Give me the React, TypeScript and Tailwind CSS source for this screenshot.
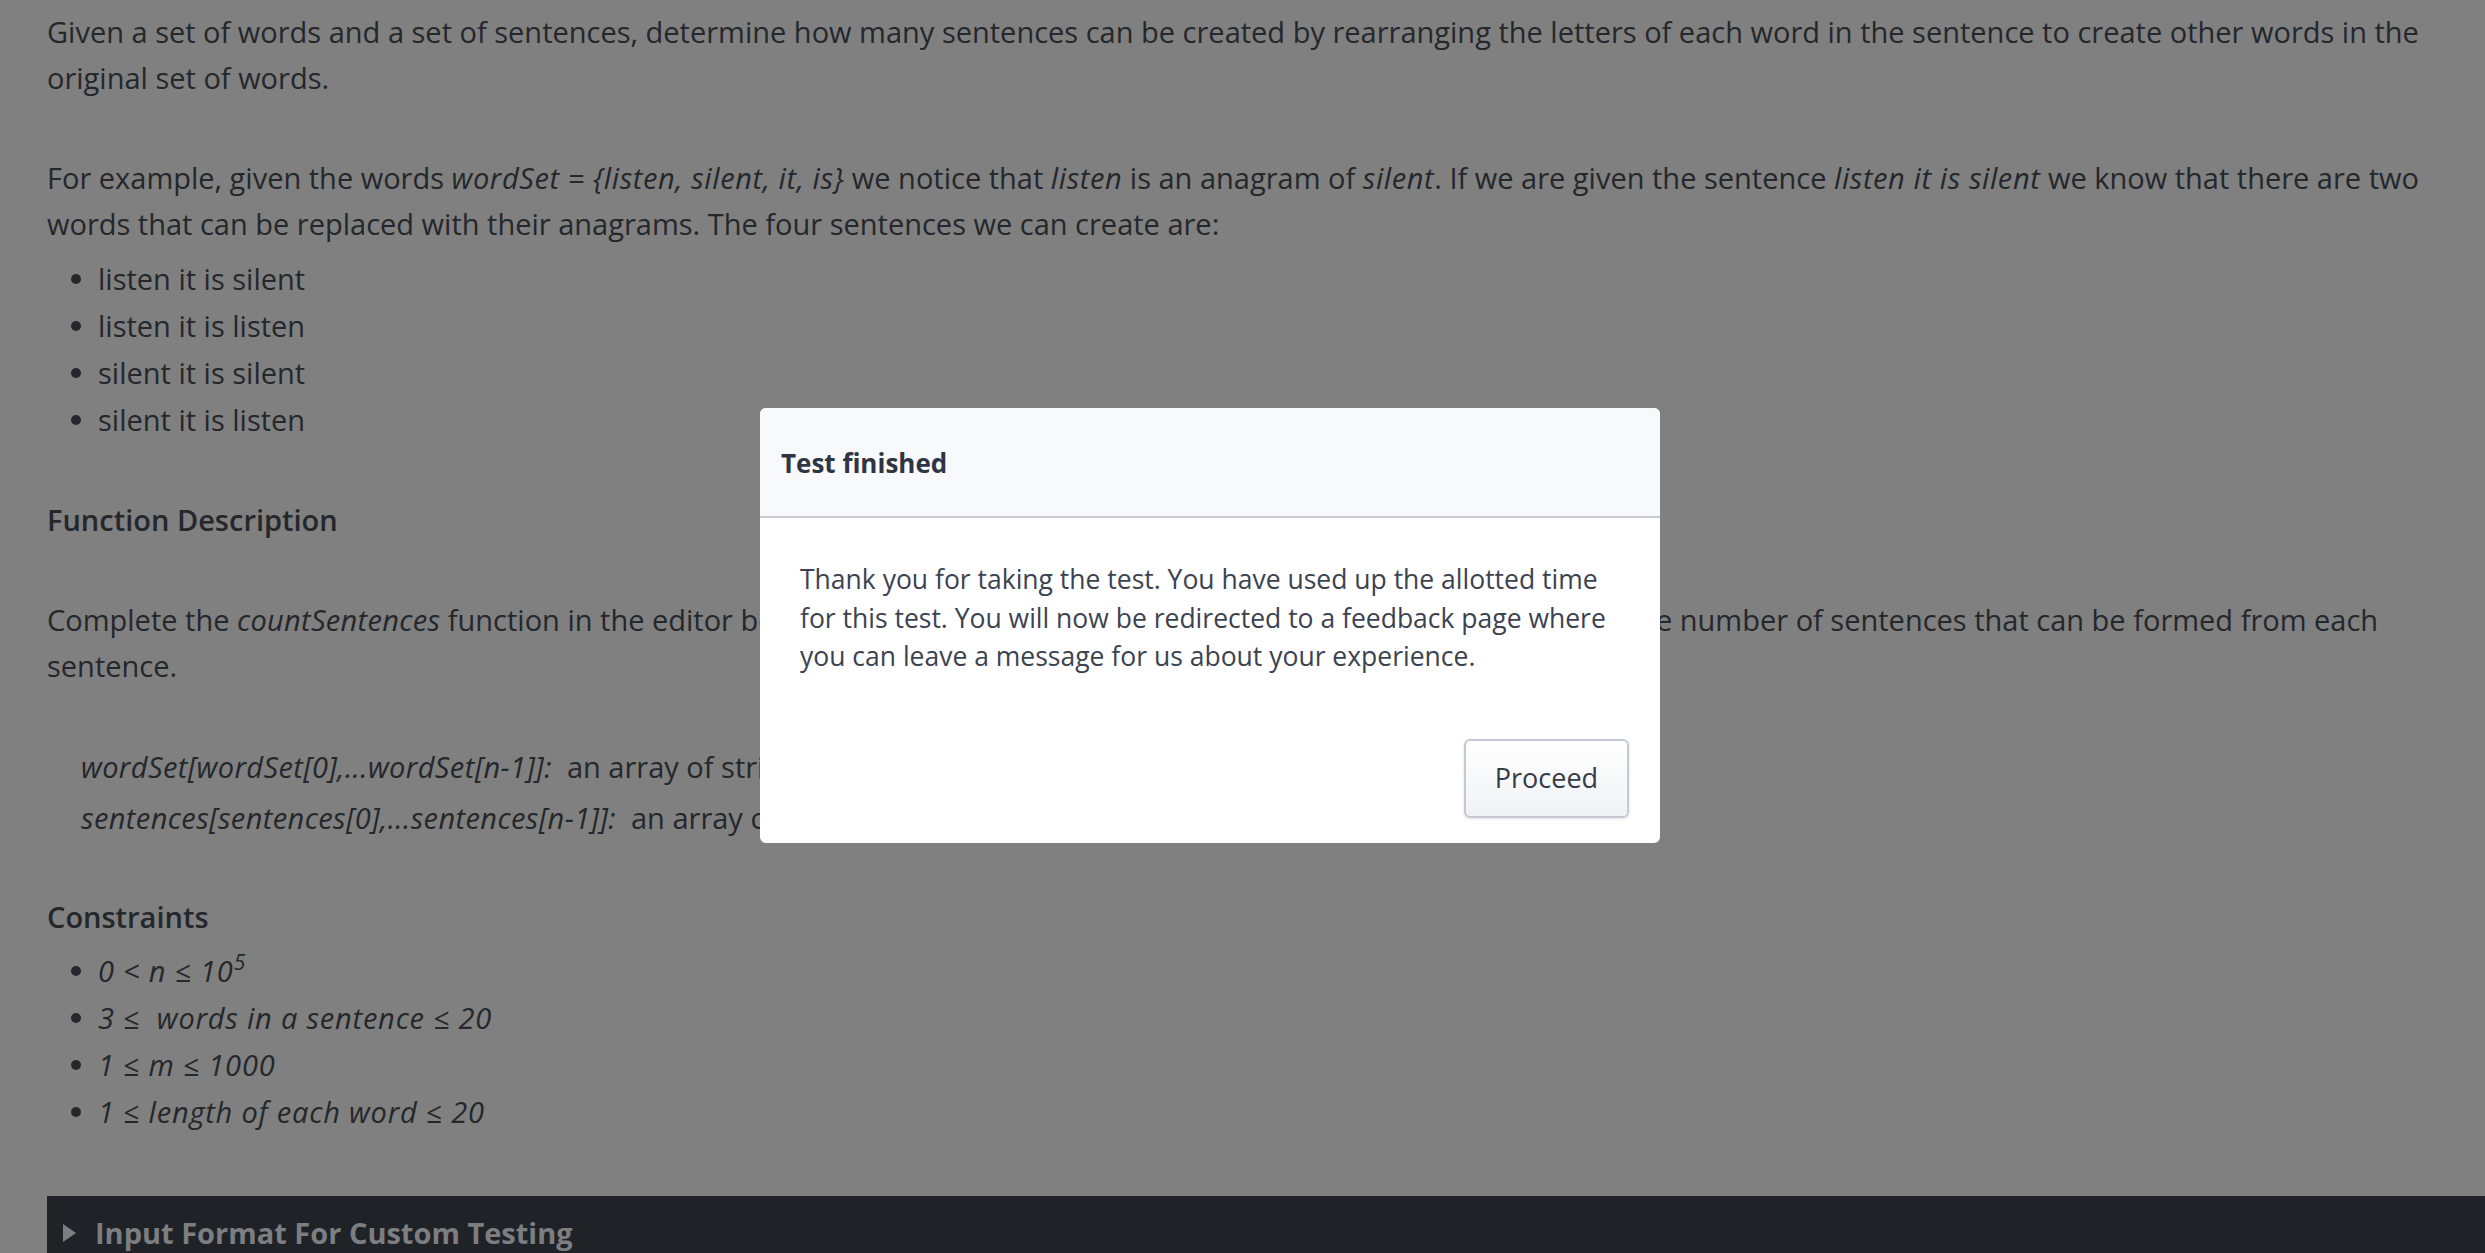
const Dot = () => (
  <span className="ml-[24px] mr-[17px] h-[10px] w-[10px] shrink-0 rounded-full bg-[#24272b]" />
);

const examples = [
  "listen it is silent",
  "listen it is listen",
  "silent it is silent",
  "silent it is listen",
];

const I = ({ children }: { children: React.ReactNode }) => (
  <i className="tracking-[0.6px]">{children}</i>
);

export default function App() {
  return (
    <div className="relative h-[1253px] w-[2485px] overflow-hidden bg-[#808080] font-['Open_Sans',sans-serif] text-[#24272b]">
      <div className="whitespace-nowrap px-[47px] pt-[9px] text-[29px] leading-[46px]">
        <p>
          Given a set of words and a set of sentences, determine how many sentences can be created by rearranging the letters of each word in the sentence to create other words in the
          <br />
          original set of words.
        </p>
        <p className="mt-[54px]">
          For example, given the words <I>wordSet = {"{listen, silent, it, is}"}</I> we notice that <I>listen</I> is an anagram of <I>silent</I>. If we are given the sentence <I>listen it is silent</I> we know that there are two
          <br />
          words that can be replaced with their anagrams. The four sentences we can create are:
        </p>
        <ul className="mt-[8px]">
          {examples.map((t) => (
            <li key={t} className="flex h-[47px] items-center">
              <Dot />
              {t}
            </li>
          ))}
        </ul>
        <h3 className="mt-[54px] font-semibold">Function Description</h3>
        <p className="mt-[54px]">
          Complete the <i className="tracking-[0.3px]">countSentences</i> function in the editor b
          <span className="tracking-[-0.15px]">elow. It should return an array of integers where each element is th</span>
          e number of sentences that can be formed from each
          <br />
          sentence.
        </p>
        <div className="mt-[52px] pl-[34px] leading-[51px]">
          <div>
            <i className="tracking-[0.4px]">wordSet[wordSet[0],...wordSet[n-1]]:</i>&nbsp; an array of strings
          </div>
          <div>
            <i className="tracking-[0.4px]">sentences[sentences[0],...sentences[n-1]]:</i>&nbsp; an array of strings
          </div>
        </div>
        <h3 className="mt-[51px] font-semibold">Constraints</h3>
        <ul className="mt-[7px] italic tracking-[0.8px]">
          <li className="flex h-[47px] items-center">
            <Dot />
            <span>
              0 &lt; n ≤ 10<sup className="-top-[12px] text-[21px]">5</sup>
            </span>
          </li>
          <li className="flex h-[47px] items-center">
            <Dot />
            3 ≤&nbsp; words in a sentence ≤ 20
          </li>
          <li className="flex h-[47px] items-center">
            <Dot />
            1 ≤ m ≤ 1000
          </li>
          <li className="flex h-[47px] items-center">
            <Dot />
            1 ≤ length of each word ≤ 20
          </li>
        </ul>
      </div>
      <div className="ml-[47px] mt-[61px] flex h-[200px] items-start gap-[19px] bg-[#1f2327] pl-[16px] pt-[20px] text-[29px] font-bold leading-[34px] text-[#7c7e81]">
        <svg width="13" height="18" viewBox="0 0 13 18" className="mt-[8px] shrink-0">
          <polygon points="0,0 13,9 0,18" fill="#7c7e81" />
        </svg>
        <span>Input Format For Custom Testing</span>
      </div>

      <div className="absolute left-[760px] top-[408px] flex h-[435px] w-[900px] flex-col rounded-[6px] bg-white">
        <div className="h-[110px] rounded-t-[6px] border-b-2 border-[#c8cad4] bg-[#f8f9fb] px-[21px] pt-[37px] text-[26px] font-bold leading-[36px] text-[#2f3542]">
          Test finished
        </div>
        <div className="whitespace-nowrap px-[40px] pt-[42px] text-[26.5px] leading-[38.5px] text-[#3c4350]">
          Thank you for taking the test. You have used up the allotted time
          <br />
          for this test. You will now be redirected to a feedback page where
          <br />
          you can leave a message for us about your experience.
        </div>
        <div className="mt-auto flex justify-end pb-[25px] pr-[31px]">
          <button className="h-[79px] w-[165px] rounded-[6px] border-2 border-[#c6c9d4] bg-linear-to-b from-white to-[#f1f2f5] text-[27px] text-[#353b47] shadow-[0_1px_3px_rgba(0,0,0,0.12)]">
            Proceed
          </button>
        </div>
      </div>
    </div>
  );
}
